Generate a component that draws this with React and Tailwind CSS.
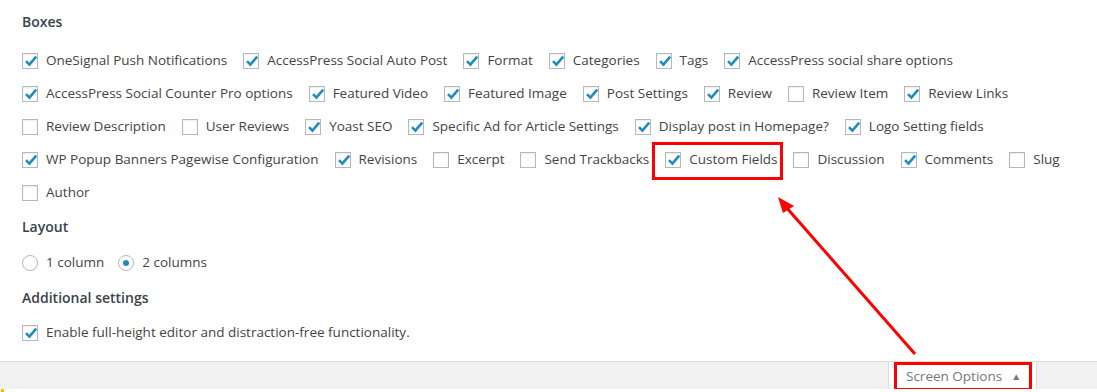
import React from "react";

const rows = [
  [
    ["OneSignal Push Notifications", true],
    ["AccessPress Social Auto Post", true],
    ["Format", true],
    ["Categories", true],
    ["Tags", true],
    ["AccessPress social share options", true],
  ],
  [
    ["AccessPress Social Counter Pro options", true],
    ["Featured Video", true],
    ["Featured Image", true],
    ["Post Settings", true],
    ["Review", true],
    ["Review Item", false],
    ["Review Links", true],
  ],
  [
    ["Review Description", false],
    ["User Reviews", false],
    ["Yoast SEO", true],
    ["Specific Ad for Article Settings", true],
    ["Display post in Homepage?", true],
    ["Logo Setting fields", true],
  ],
  [
    ["WP Popup Banners Pagewise Configuration", true],
    ["Revisions", true],
    ["Excerpt", false],
    ["Send Trackbacks", false],
    ["Custom Fields", true],
    ["Discussion", false],
    ["Comments", true],
    ["Slug", false],
  ],
  [["Author", false]],
];

const Checkbox = ({ checked }) => (
  <span className="relative flex h-4 w-4 shrink-0 items-center justify-center border border-[#b4b9be] bg-white shadow-[inset_0_1px_2px_rgba(0,0,0,0.07)]">
    {checked && (
      <svg viewBox="0 0 16 16" className="absolute left-[0px] top-[-1px] h-4 w-4">
        <path
          d="M3 8.2 L6.4 11.6 L13.2 3.6"
          fill="none"
          stroke="#1e8cbe"
          strokeWidth="2.6"
          strokeLinecap="butt"
        />
      </svg>
    )}
  </span>
);

const Radio = ({ checked }) => (
  <span className="flex h-4 w-4 shrink-0 items-center justify-center rounded-full border border-[#b4b9be] bg-white">
    {checked && <span className="h-[6px] w-[6px] rounded-full bg-[#1e8cbe]" />}
  </span>
);

const Item = ({ label, checked }) => (
  <label className="flex items-center">
    <Checkbox checked={checked} />
    <span className="ml-[8px]">{label}</span>
  </label>
);

const App = () => {
  return (
    <div
      className="relative h-[392px] w-[1097px] overflow-hidden bg-white text-[13.5px] text-[#444]"
      style={{ fontFamily: '"Open Sans", "Noto Sans", sans-serif' }}
    >
      <div className="border-b border-[#dddddd] px-[22px] pt-[12px] pb-[12px]">
        <h5 className="h-5 text-[14px] font-semibold leading-5 text-[#3c434a]">Boxes</h5>
        <div className="mt-[12px]">
          {rows.map((row, i) => (
            <div key={i} className="flex h-[33px] items-center gap-x-[16px]">
              {row.map(([label, checked]) => (
                <Item key={label} label={label} checked={checked} />
              ))}
            </div>
          ))}
        </div>

        <h5 className="mt-[8px] h-5 text-[14px] font-semibold leading-5 text-[#3c434a]">Layout</h5>
        <div className="mt-[9px] flex h-[33px] items-center gap-x-[14px]">
          <label className="flex items-center">
            <Radio checked={false} />
            <span className="ml-[8px]">1 column</span>
          </label>
          <label className="flex items-center">
            <Radio checked={true} />
            <span className="ml-[8px]">2 columns</span>
          </label>
        </div>

        <h5 className="mt-[9px] h-5 text-[14px] font-semibold leading-5 text-[#3c434a]">
          Additional settings
        </h5>
        <div className="mt-[8px] flex h-[33px] items-center">
          <Item label="Enable full-height editor and distraction-free functionality." checked={true} />
        </div>
      </div>

      <div className="flex h-[30px] bg-[#f1f1f1]">
        <div className="flex-1" />
        <div className="mr-[60px] flex w-[149px] items-start justify-end border-x border-[#dddddd] bg-white pr-[4px]">
          <div className="flex h-[29px] w-[138px] items-center border-[3px] border-[#ff0000] pl-[9px] text-[#72777c]">
            <span>Screen Options</span>
            <span className="ml-[9px] text-[10px]">▲</span>
          </div>
        </div>
      </div>
      <div className="absolute bottom-0 left-0 h-[3px] w-full bg-white">
        <span className="absolute left-[1px] top-0 h-[3px] w-[3px] bg-[#ffb900]" />
      </div>

      {/* annotations */}
      <div className="pointer-events-none absolute left-[652px] top-[142px] h-[38px] w-[131px] border-[3px] border-[#ff0000]" />
      <svg className="pointer-events-none absolute left-0 top-0" width="1097" height="392">
        <line x1="915" y1="354" x2="786" y2="207" stroke="#ff0000" strokeWidth="3" />
        <polygon points="778,197 794,206 783,213" fill="#ff0000" />
      </svg>
    </div>
  );
};

export default App;
